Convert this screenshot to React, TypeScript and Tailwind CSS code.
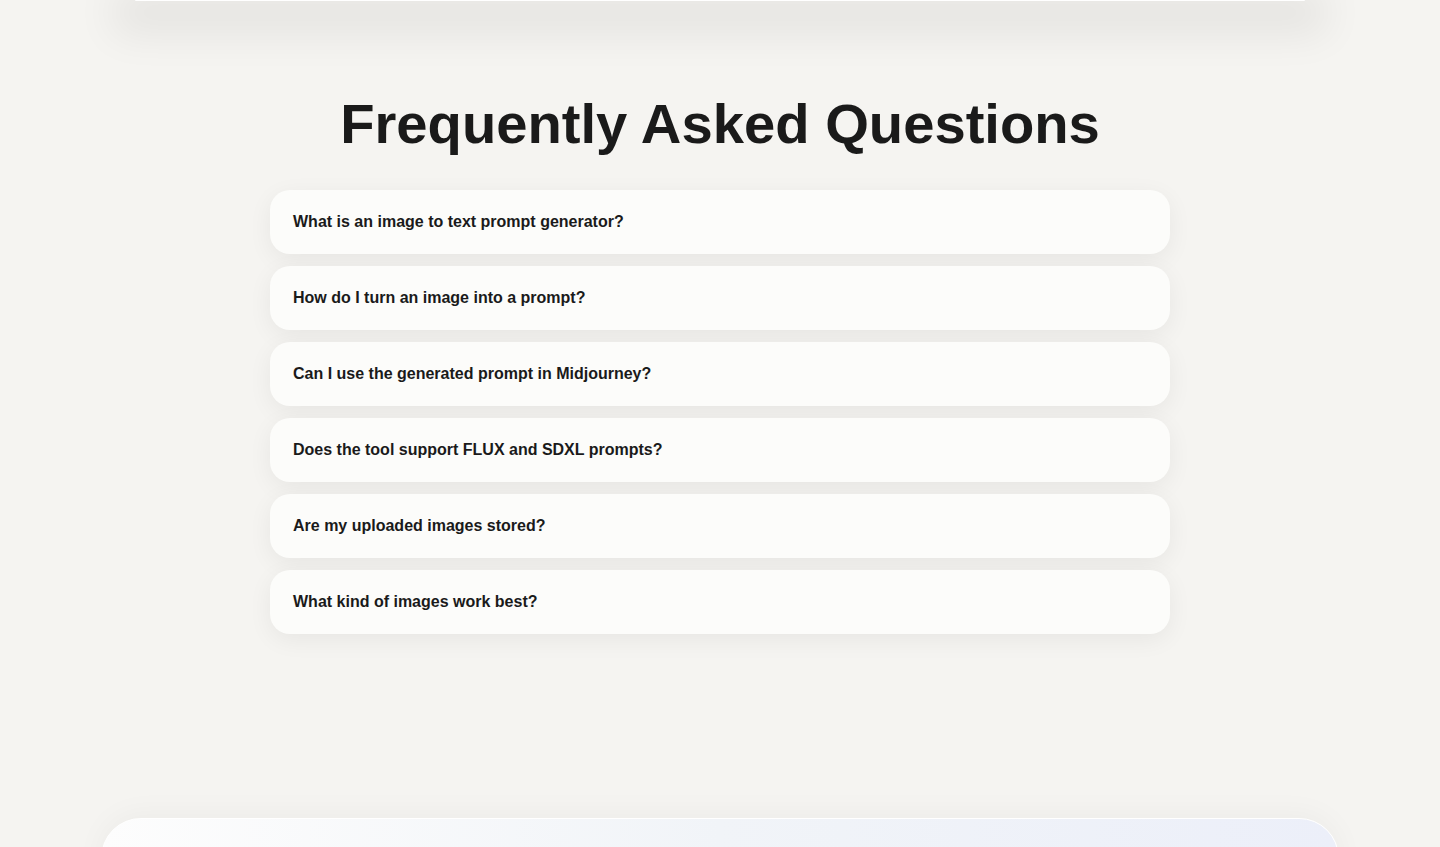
const questions = [
  "What is an image to text prompt generator?",
  "How do I turn an image into a prompt?",
  "Can I use the generated prompt in Midjourney?",
  "Does the tool support FLUX and SDXL prompts?",
  "Are my uploaded images stored?",
  "What kind of images work best?",
];

function FaqItem({ question }: { question: string }) {
  return (
    <div className="flex h-16 items-center rounded-[20px] bg-[#fcfcfa] px-[23px] shadow-[0_6px_24px_rgba(0,0,0,0.06)]">
      <span className="text-base font-bold text-[#1a1a1a]">{question}</span>
    </div>
  );
}

export default function App() {
  return (
    <div className="min-h-[847px] overflow-hidden bg-[#f5f4f1] font-['Liberation_Sans',Arial,sans-serif]">
      {/* tail end of the previous section's card */}
      <div className="mx-auto h-[1px] w-[1170px] rounded-b-[24px] bg-white shadow-[0_12px_40px_22px_rgba(0,0,0,0.065)]" />

      <section className="pt-[92px]">
        <h1 className="text-center text-[56.2px] font-bold leading-[1.1] text-[#1a1a1a]">
          Frequently Asked Questions
        </h1>
        <div className="mx-auto mt-[35px] flex w-[900px] flex-col gap-3">
          {questions.map((q) => (
            <FaqItem key={q} question={q} />
          ))}
        </div>
      </section>

      <div className="mx-auto mt-[184px] h-[120px] w-[1238px] rounded-t-[40px] border border-white bg-gradient-to-r from-[#fdfdfd] via-[#f1f4f8] to-[#eceff9] shadow-[0_-4px_30px_rgba(0,0,0,0.04)]" />
    </div>
  );
}
